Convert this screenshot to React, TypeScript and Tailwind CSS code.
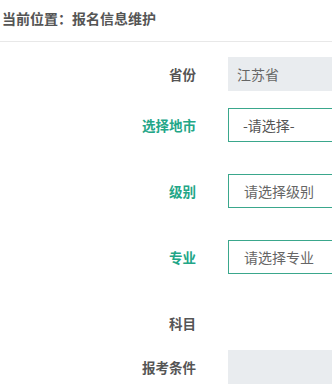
import React from "react";

const font = { fontFamily: '"Noto Sans CJK SC", "Liberation Sans", sans-serif' };

function Row({
  label,
  green,
  className,
  children,
}: {
  label: string;
  green?: boolean;
  className?: string;
  children?: React.ReactNode;
}) {
  return (
    <div className={`flex items-center h-[34px] ${className ?? ""}`}>
      <label
        className={`w-[196px] shrink-0 text-right text-[13.5px] font-bold ${
          green ? "text-[#22a687]" : "text-[#555]"
        }`}
      >
        {label}
      </label>
      <div className="ml-8 w-[140px] shrink-0 h-full">{children}</div>
    </div>
  );
}

export default function App() {
  return (
    <div className="w-full h-[384px] overflow-hidden bg-white" style={font}>
      {/* Breadcrumb */}
      <div className="h-[42px] border-b border-[#e8e8e8] flex items-center pl-[2px] pb-[6px]">
        <span className="text-sm font-bold text-[#555]">当前位置：报名信息维护</span>
      </div>

      <div className="pt-[15px]">
        <Row label="省份">
          <div className="h-full bg-[#e9ecef] flex items-center pl-[9px] text-sm text-[#666]">江苏省</div>
        </Row>

        <Row label="选择地市" green className="mt-[17px]">
          <div className="h-full border border-[#3aa78c] flex items-center pl-[14px] text-sm text-[#555]">
            -请选择-
          </div>
        </Row>

        <Row label="级别" green className="mt-8">
          <div className="h-full border border-[#3aa78c] flex items-center pl-[15px] text-sm text-[#666]">
            请选择级别
          </div>
        </Row>

        <Row label="专业" green className="mt-8">
          <div className="h-full border border-[#3aa78c] flex items-center pl-[15px] text-sm text-[#666]">
            请选择专业
          </div>
        </Row>

        <Row label="科目" className="mt-8" />

        <Row label="报考条件" className="mt-[10px]">
          <div className="h-full bg-[#e9ecef]" />
        </Row>
      </div>
    </div>
  );
}
